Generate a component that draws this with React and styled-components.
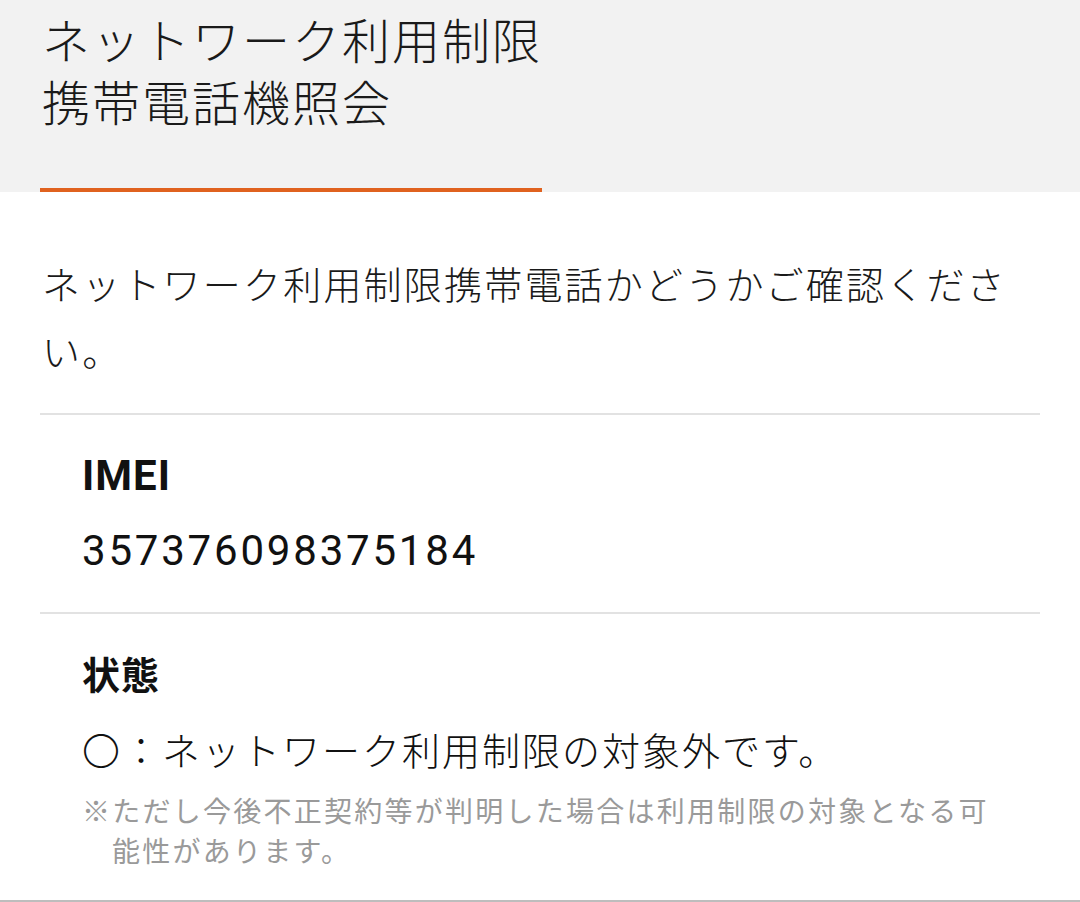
import styled, { createGlobalStyle } from "styled-components";

const GlobalStyle = createGlobalStyle`
  html, body {
    margin: 0;
    padding: 0;
    background: #ffffff;
  }
  body {
    font-family: "Noto Sans CJK JP", "Noto Sans", sans-serif;
    color: #111;
  }
`;

const Page = styled.div`
  width: 1080px;
  min-height: 902px;
  background: #fff;
  border-bottom: 2px solid #bdbdbd;
  box-sizing: border-box;
`;

const Header = styled.header`
  height: 192px;
  background: #f2f2f2;
  padding: 7px 40px 0;
  box-sizing: border-box;
  display: flex;
  flex-direction: column;
`;

const Title = styled.h1`
  margin: 0 0 0 2px;
  font-size: 48px;
  font-weight: 300;
  line-height: 62px;
  letter-spacing: 2px;
  color: #1a1a1a;
`;

const Accent = styled.div`
  margin-top: auto;
  width: 502px;
  height: 4px;
  background: #e0621f;
`;

const Content = styled.main`
  padding: 0 40px;
`;

const Lead = styled.p`
  margin: 57px 0 30px 2px;
  font-size: 38px;
  font-weight: 300;
  line-height: 67px;
  letter-spacing: 2.2px;
  color: #1a1a1a;
`;

const Row = styled.section`
  border-top: 2px solid #e2e2e2;
  padding: ${(p) => p.$pad};
  padding-left: 42px;
  padding-right: 42px;
`;

const Label = styled.h2`
  margin: 0 0 ${(p) => p.$gap || 15}px;
  font-family: ${(p) =>
    p.$latin ? `Roboto, "Noto Sans CJK JP", sans-serif` : `"Noto Sans CJK JP", sans-serif`};
  font-size: ${(p) => (p.$latin ? 42 : 38)}px;
  font-weight: 700;
  line-height: 60px;
  letter-spacing: 1px;
  color: #111;
`;

const Imei = styled.div`
  font-family: Roboto, sans-serif;
  font-size: 42px;
  line-height: 60px;
  letter-spacing: 2.8px;
  color: #111;
`;

const Status = styled.div`
  margin-bottom: 11px;
  font-size: 38px;
  font-weight: 300;
  line-height: 60px;
  letter-spacing: 2px;
  color: #111;
`;

const Note = styled.p`
  margin: 0;
  padding-left: 30px;
  text-indent: -30px;
  font-size: 28px;
  line-height: 40px;
  letter-spacing: 2.25px;
  color: #9a9a9a;
`;

export default function App() {
  return (
    <>
      <GlobalStyle />
      <Page>
        <Header>
          <Title>
            ネットワーク利用制限
            <br />
            携帯電話機照会
          </Title>
          <Accent />
        </Header>
        <Content>
          <Lead>ネットワーク利用制限携帯電話かどうかご確認ください。</Lead>
          <Row $pad="31px 0 31px">
            <Label $latin>IMEI</Label>
            <Imei>357376098375184</Imei>
          </Row>
          <Row $pad="29px 0 28px">
            <Label $gap={16}>状態</Label>
            <Status>〇：ネットワーク利用制限の対象外です。</Status>
            <Note>
              ※ただし今後不正契約等が判明した場合は利用制限の対象となる可能性があります。
            </Note>
          </Row>
        </Content>
      </Page>
    </>
  );
}
